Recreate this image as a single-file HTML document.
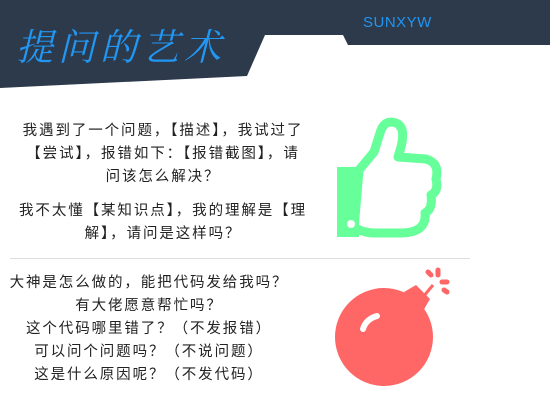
<!DOCTYPE html><html><head><meta charset="utf-8"><style>
body{margin:0;width:550px;height:400px;background:#fff;overflow:hidden;position:relative;font-family:"Liberation Sans","Noto Sans CJK SC",sans-serif;color:#222}
.t{position:absolute;font-size:14.5px;line-height:23px;text-align:center;letter-spacing:1.9px;font-feature-settings:"fwid"}
</style></head><body>
<svg width="550" height="400" style="position:absolute;left:0;top:0">
<polygon points="0,0 550,0 550,45 348,45 343,35 265,35 247,76 0,88" fill="#2c3a4b"/>
<text x="16" y="60" font-family="'Noto Serif CJK SC',serif" font-size="37" font-style="italic" fill="#2196f3" letter-spacing="5">提问的艺术</text>
<text x="363" y="27" font-family="'Liberation Sans',sans-serif" font-size="15" fill="#2196f3" letter-spacing="0.5">SUNXYW</text>
<line x1="10" y1="258.5" x2="470" y2="258.5" stroke="#ddd"/>
<g fill="#66ff99">
<path d="M337,167 h22 v70 h-22 z" />
<path d="M359,170 l15,-18 l6,-19 q4,-14 16,-10 q10,4 5,24 l-3,10 l28,2 q14,4 10,20 q3,12 -5,16 q2,14 -6,18 q2,20 -25,20 l-26,0 q-8,0 -17,-4 l-3,0 z" fill="none" stroke="#66ff99" stroke-width="9" stroke-linejoin="round"/>
</g>
<circle cx="351" cy="224" r="4" fill="#fff"/>
<g fill="#ff6666">
<circle cx="384" cy="337" r="49"/>
<path d="M404,292 l12,-7 l14,14 l-7,12 z"/>
<path d="M423,297 l10,-12" stroke="#ff6666" stroke-width="3"/>
<g stroke="#ff6666" stroke-width="5" stroke-linecap="round"><path d="M428,272 l3,3"/><path d="M438,270 l0,5"/><path d="M442,282 l5,0"/><path d="M444,290 l3,2"/></g>
</g>
<path d="M363,329 q3,-10 14,-13" fill="none" stroke="#fff" stroke-width="6" stroke-linecap="round"/>
</svg>
<div class="t" style="left:0px;top:120px;width:326px">我遇到了一个问题，【描述】，我试过了<br>【尝试】，报错如下：【报错截图】，请<br>问该怎么解决？</div>
<div class="t" style="left:0px;top:200px;width:326px">我不太懂【某知识点】，我的理解是【理<br>解】，请问是这样吗？</div>
<div class="t" style="left:0px;top:272px;width:298px">大神是怎么做的，能把代码发给我吗？<br>有大佬愿意帮忙吗？<br>这个代码哪里错了？（不发报错）<br>可以问个问题吗？（不说问题）<br>这是什么原因呢？（不发代码）</div>
</body></html>
